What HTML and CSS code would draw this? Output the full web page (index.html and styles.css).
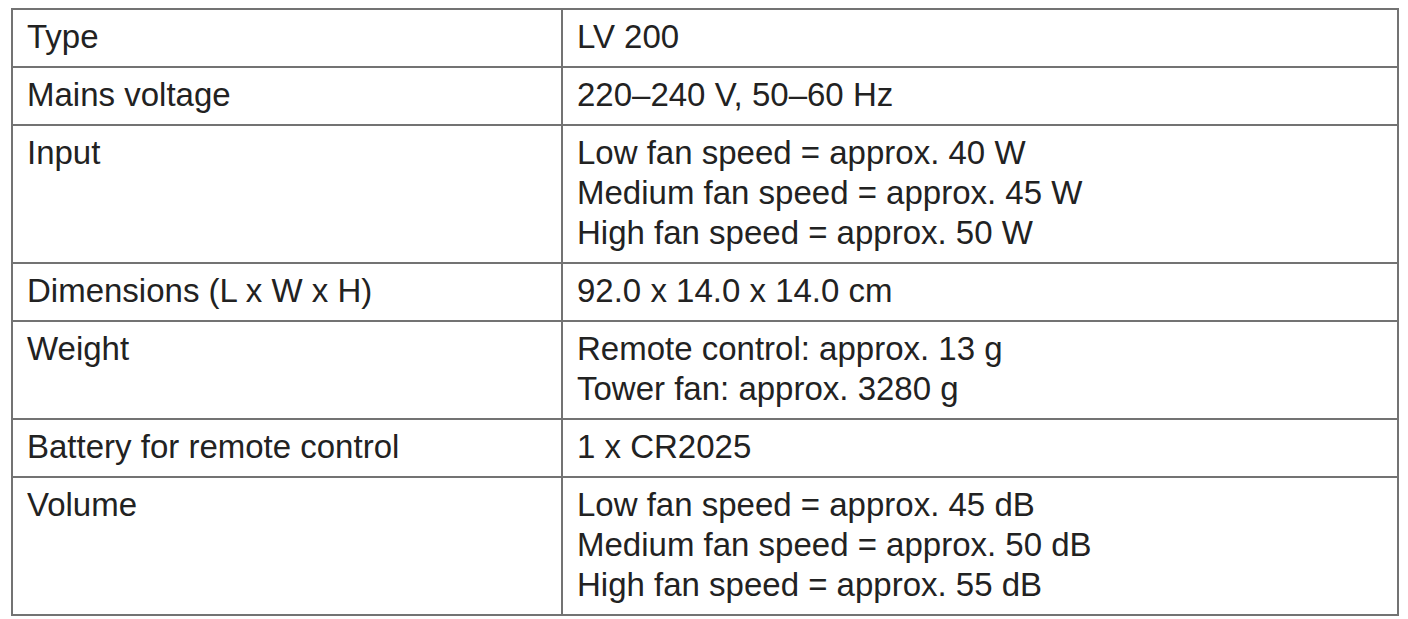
FILE: index.html
```html
<!DOCTYPE html>
<html lang="en">
<head>
<meta charset="utf-8">
<title>Technical data</title>
<link rel="stylesheet" href="styles.css">
</head>
<body>
<table class="specs">
  <tr><td class="label">Type</td><td class="value">LV 200</td></tr>
  <tr><td class="label">Mains voltage</td><td class="value">220–240 V, 50–60 Hz</td></tr>
  <tr><td class="label">Input</td><td class="value">Low fan speed = approx. 40 W<br>Medium fan speed = approx. 45 W<br>High fan speed = approx. 50 W</td></tr>
  <tr><td class="label">Dimensions (L x W x H)</td><td class="value">92.0 x 14.0 x 14.0 cm</td></tr>
  <tr><td class="label">Weight</td><td class="value">Remote control: approx. 13 g<br>Tower fan: approx. 3280 g</td></tr>
  <tr><td class="label">Battery for remote control</td><td class="value">1 x CR2025</td></tr>
  <tr><td class="label">Volume</td><td class="value">Low fan speed = approx. 45 dB<br>Medium fan speed = approx. 50 dB<br>High fan speed = approx. 55 dB</td></tr>
</table>
</body>
</html>
```
FILE: styles.css
```css
html, body {
  background: #ffffff;
}
body {
  margin: 0;
  padding: 8px 0 0 11px;
  font-family: "Liberation Sans", Arial, sans-serif;
  color: #222222;
}
.specs {
  border-collapse: collapse;
  width: 1388px;
  table-layout: fixed;
}
.specs td {
  border: 2px solid #737373;
  vertical-align: top;
  font-size: 33px;
  line-height: 40px;
  padding: 7px 14px 9px 14px;
}
.specs .label {
  width: 550px;
  box-sizing: border-box;
}
```
